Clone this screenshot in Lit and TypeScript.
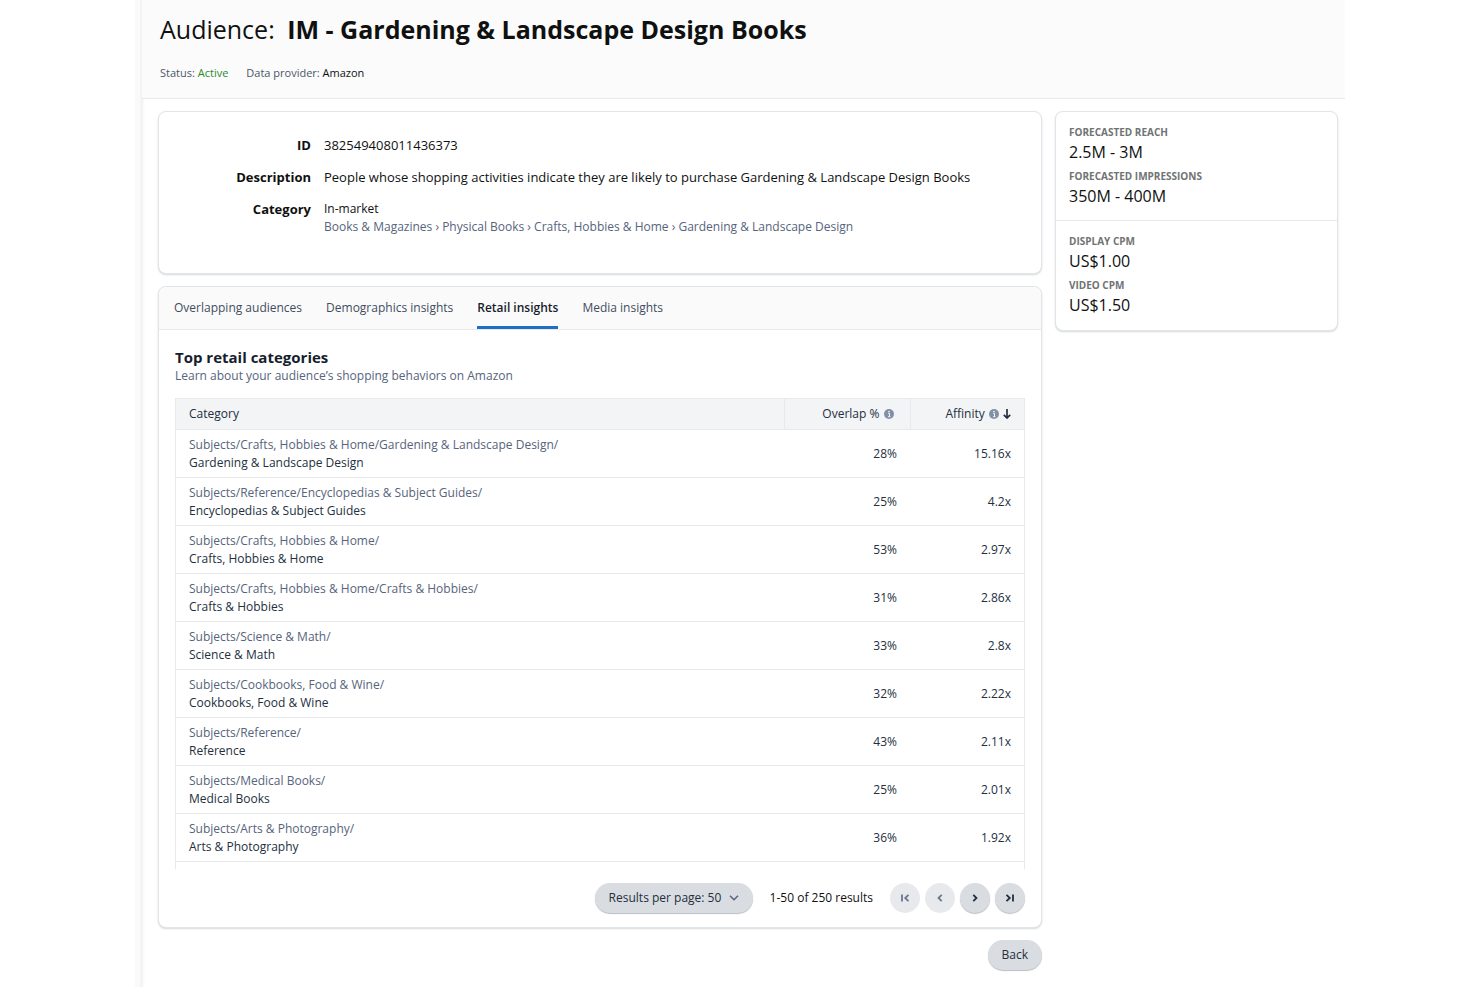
import { LitElement, html, css, svg } from 'lit';
import { customElement, state } from 'lit/decorators.js';
import { classMap } from 'lit/directives/class-map.js';

interface RetailCategory {
  path: string;
  name: string;
  overlap: string;
  affinity: string;
}

const CATEGORIES: RetailCategory[] = [
  { path: 'Subjects/Crafts, Hobbies & Home/Gardening & Landscape Design/', name: 'Gardening & Landscape Design', overlap: '28%', affinity: '15.16x' },
  { path: 'Subjects/Reference/Encyclopedias & Subject Guides/', name: 'Encyclopedias & Subject Guides', overlap: '25%', affinity: '4.2x' },
  { path: 'Subjects/Crafts, Hobbies & Home/', name: 'Crafts, Hobbies & Home', overlap: '53%', affinity: '2.97x' },
  { path: 'Subjects/Crafts, Hobbies & Home/Crafts & Hobbies/', name: 'Crafts & Hobbies', overlap: '31%', affinity: '2.86x' },
  { path: 'Subjects/Science & Math/', name: 'Science & Math', overlap: '33%', affinity: '2.8x' },
  { path: 'Subjects/Cookbooks, Food & Wine/', name: 'Cookbooks, Food & Wine', overlap: '32%', affinity: '2.22x' },
  { path: 'Subjects/Reference/', name: 'Reference', overlap: '43%', affinity: '2.11x' },
  { path: 'Subjects/Medical Books/', name: 'Medical Books', overlap: '25%', affinity: '2.01x' },
  { path: 'Subjects/Arts & Photography/', name: 'Arts & Photography', overlap: '36%', affinity: '1.92x' },
];

const TABS = ['Overlapping audiences', 'Demographics insights', 'Retail insights', 'Media insights'];

const CRUMBS = ['Books & Magazines', 'Physical Books', 'Crafts, Hobbies & Home', 'Gardening & Landscape Design'];

const infoIcon = svg`<svg class="info" viewBox="0 0 10 10" width="10" height="10" aria-hidden="true">
  <circle cx="5" cy="5" r="5" fill="#8290a6"/>
  <path d="M4.1 4.3H5.5V7.6M4 7.7H6.4" stroke="#f2f4f6" stroke-width="1" fill="none"/>
  <circle cx="5" cy="2.6" r=".8" fill="#f2f4f6"/>
</svg>`;

const sortIcon = svg`<svg class="sort" viewBox="0 0 8 10" width="8" height="10" aria-hidden="true">
  <path d="M4 0V9M.8 5.8L4 9L7.2 5.8" stroke="#232f3e" stroke-width="1.7" fill="none"/>
</svg>`;

const PAGER = [
  { label: 'First page', path: 'M3 2.5V9.5M9.5 2.8L6.2 6L9.5 9.2', off: true },
  { label: 'Previous page', path: 'M7.7 2.8L4.5 6L7.7 9.2', off: true },
  { label: 'Next page', path: 'M4.3 2.8L7.5 6L4.3 9.2', off: false },
  { label: 'Last page', path: 'M2.5 2.8L5.8 6L2.5 9.2M9 2.5V9.5', off: false },
];

@customElement('app-root')
export class AppRoot extends LitElement {
  @state() private activeTab = 2;

  static styles = css`
    :host {
      display: block;
      min-height: 100vh;
      box-sizing: border-box;
      padding: 0 135px;
      background: #fff;
      color: #0f1111;
      font-family: 'Open Sans', 'Noto Sans', sans-serif;
      font-size: 12px;
      line-height: 18px;
    }
    * { box-sizing: border-box; }
    h1, h2, p, dl, dd { margin: 0; }
    button, select { font: inherit; color: inherit; border: 0; cursor: pointer; }
    .frame {
      display: grid;
      grid-template-columns: 7px minmax(0, 1fr);
      min-height: 100vh;
    }
    .edge { background: linear-gradient(90deg, #fafafa 0 5px, #f0f0f0 6px, #f4f4f4 7px); }
    .page { box-shadow: inset 3px 0 3px -2px #f0f0f0; }
    header {
      padding: 11px 18px 16px;
      background: #fbfbfb;
      border-bottom: 1px solid #e7e9ec;
    }
    h1 {
      font-size: 25px;
      line-height: 36px;
      font-weight: 400;
    }
    h1 b { margin-left: 6px; }
    .meta {
      display: flex;
      gap: 18px;
      margin-top: 17px;
      font-size: 11px;
      color: #4b5669;
    }
    .meta b { font-weight: 400; color: #0f1111; }
    .meta .active { color: #2b8a2f; }
    .columns {
      display: grid;
      grid-template-columns: minmax(0, 1fr) 283px;
      gap: 13px;
      align-items: start;
      padding: 12px 7px 16px 16px;
    }
    .main { display: grid; gap: 12px; }
    .card {
      background: #fff;
      border: 1px solid #e1e4e8;
      border-radius: 8px;
      box-shadow: 0 1px 2px #d5d9d9;
      overflow: hidden;
    }
    .details {
      display: grid;
      grid-template-columns: 152px minmax(0, 1fr);
      gap: 14px 13px;
      padding: 24px 0 37px;
      font-size: 13px;
    }
    .details dt { text-align: right; font-weight: 700; }
    .small { font-size: 12px; }
    .crumbs { color: #56647c; }
    .tabs {
      display: flex;
      gap: 24px;
      padding: 0 15px;
      background: #fafafa;
      border-bottom: 1px solid #e7e9ec;
    }
    .tab {
      padding: 12px 0 9px;
      background: none;
      border-bottom: 3px solid transparent;
      color: #414d5f;
      font-weight: 500;
    }
    .tab.on { color: #161e2d; font-weight: 600; border-color: #1f6fc9; }
    .panel { padding: 17px 16px 14px; }
    h2 { font-size: 15px; line-height: 20px; color: #161e2d; }
    .sub { color: #56647c; }
    .scroller {
      margin-top: 13px;
      padding-bottom: 7px;
      border: 1px solid #e7e9ec;
      border-width: 0 1px;
    }
    table { width: 100%; border-collapse: collapse; table-layout: fixed; color: #232f3e; }
    .overlap { width: 126px; }
    .affinity { width: 114px; }
    th {
      padding: 6px 13px;
      background: #f2f4f6;
      border: 1px solid #e7e9ec;
      border-width: 1px 0;
      font-weight: 400;
      text-align: left;
    }
    th.num { border-left-width: 1px; }
    td { padding: 6px 13px 5px; border-bottom: 1px solid #e7e9ec; }
    .num { text-align: right; }
    .num.has-gap { padding-right: 16px; }
    .path { color: #56647c; }
    .info, .sort { vertical-align: -1px; margin-left: 1px; }
    .footer {
      display: flex;
      justify-content: flex-end;
      align-items: center;
      gap: 17px;
      margin-top: 14px;
    }
    .size { display: grid; align-items: center; }
    .size select, .size svg { grid-area: 1 / 1; }
    .size svg { justify-self: end; margin-right: 14px; pointer-events: none; }
    .size select { appearance: none; padding: 0 31px 0 14px; }
    .pill {
      height: 30px;
      border-radius: 15px;
      background: #d9dce1;
      color: #232f3e;
      box-shadow: 0 1px 1px #b9bec6;
    }
    .pager { display: flex; gap: 5px; }
    .pager .pill { display: grid; place-items: center; width: 30px; padding: 0; }
    .pager .pill:disabled { background: #e8e9ed; color: #6b778c; box-shadow: none; cursor: default; }
    .back { justify-self: end; padding: 0 14px; font-weight: 500; }
    .stats { padding: 11px 13px 13px; }
    .stats + .stats { padding-bottom: 14px; border-top: 1px solid #e7e9ec; }
    .stats dt { font-size: 10px; font-weight: 700; color: #6f7373; text-transform: uppercase; }
    .stats dd { font-size: 16px; line-height: 22px; }
    .stats dd + dt { margin-top: 4px; }
  `;

  private renderDetails() {
    return html`
      <dl class="card details">
        <dt>ID</dt><dd>382549408011436373</dd>
        <dt>Description</dt>
        <dd>People whose shopping activities indicate they are likely to purchase Gardening &amp; Landscape Design Books</dd>
        <dt>Category</dt>
        <dd class="small">
          <p>In-market</p>
          <p class="crumbs">${CRUMBS.join(' › ')}</p>
        </dd>
      </dl>`;
  }

  private renderTable() {
    return html`
      <div class="scroller">
        <table>
          <colgroup><col /><col class="overlap" /><col class="affinity" /></colgroup>
          <thead>
            <tr>
              <th scope="col">Category</th>
              <th scope="col" class="num has-gap">Overlap % ${infoIcon}</th>
              <th scope="col" class="num" aria-sort="descending">Affinity ${infoIcon} ${sortIcon}</th>
            </tr>
          </thead>
          <tbody>
            ${CATEGORIES.map((c) => html`
              <tr>
                <td><div class="path">${c.path}</div><div>${c.name}</div></td>
                <td class="num">${c.overlap}</td>
                <td class="num">${c.affinity}</td>
              </tr>`)}
          </tbody>
        </table>
      </div>`;
  }

  private renderFooter() {
    return html`
      <div class="footer">
        <div class="size">
          <select class="pill" aria-label="Results per page">
            <option>Results per page: 50</option>
            <option>Results per page: 25</option>
            <option>Results per page: 10</option>
          </select>
          <svg viewBox="0 0 10 6" width="10" height="6" aria-hidden="true">
            <path d="M1 .8L5 4.8L9 .8" fill="none" stroke="#56647c" stroke-width="1.5" />
          </svg>
        </div>
        <span>1-50 of 250 results</span>
        <nav class="pager" aria-label="Pagination">
          ${PAGER.map((p) => html`
            <button class="pill" aria-label=${p.label} ?disabled=${p.off}>
              <svg viewBox="0 0 12 12" width="12" height="12" aria-hidden="true">
                <path d=${p.path} fill="none" stroke="currentColor" stroke-width="1.8" />
              </svg>
            </button>`)}
        </nav>
      </div>`;
  }

  render() {
    return html`
      <div class="frame">
        <div class="edge"></div>
        <div class="page">
          <header>
            <h1>Audience: <b>IM - Gardening &amp; Landscape Design Books</b></h1>
            <div class="meta">
              <span>Status: <b class="active">Active</b></span>
              <span>Data provider: <b>Amazon</b></span>
            </div>
          </header>
          <div class="columns">
            <main class="main">
              ${this.renderDetails()}
              <section class="card">
                <div class="tabs" role="tablist">
                  ${TABS.map((t, i) => html`
                    <button
                      role="tab"
                      class=${classMap({ tab: true, on: i === this.activeTab })}
                      aria-selected=${i === this.activeTab}
                      @click=${() => { this.activeTab = i; }}
                    >${t}</button>`)}
                </div>
                <div class="panel" role="tabpanel">
                  <h2>Top retail categories</h2>
                  <p class="sub">Learn about your audience’s shopping behaviors on Amazon</p>
                  ${this.renderTable()}
                  ${this.renderFooter()}
                </div>
              </section>
              <button class="pill back">Back</button>
            </main>
            <aside class="card">
              <dl class="stats">
                <dt>Forecasted reach</dt><dd>2.5M - 3M</dd>
                <dt>Forecasted impressions</dt><dd>350M - 400M</dd>
              </dl>
              <dl class="stats">
                <dt>Display CPM</dt><dd>US$1.00</dd>
                <dt>Video CPM</dt><dd>US$1.50</dd>
              </dl>
            </aside>
          </div>
        </div>
      </div>`;
  }
}
